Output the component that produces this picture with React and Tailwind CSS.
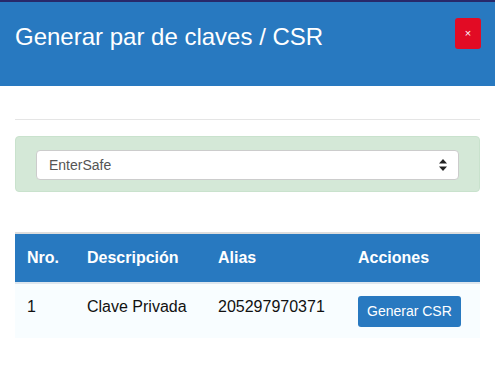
import React from 'react';

export default function App() {
    return (
        <div className="w-[495px] h-[367px] bg-white overflow-hidden" style={{ fontFamily: '"Liberation Sans", Arial, sans-serif' }}>
            <div className="h-[2px] bg-[#28296a]"></div>
            {/* modal header */}
            <div className="h-[84px] bg-[#2879c0] flex justify-between items-start pt-[16px] pl-[15px] pr-[14px]">
                <h4 className="text-white text-[24px] leading-[32px] mt-[3px]">Generar par de claves / CSR</h4>
                <button className="w-[26px] h-[31px] bg-[#e20b24] rounded-[3px] text-white text-[11px] leading-none flex items-center justify-center">
                    ×
                </button>
            </div>

            <div className="px-[15px]">
                <hr className="mt-[33px] border-0 border-t border-[#e5e5e5]" />

                <div className="mt-[16px] h-[56px] bg-[#d4e8d7] border border-[#c9e2cd] rounded-[4px] px-[20px] pt-[13px]">
                    <div className="h-[30px] bg-white border border-[#cccccc] rounded-[4px] flex items-center justify-between pl-[12px] pr-[10px]">
                        <span className="text-[14px] text-[#555555]">EnterSafe</span>
                        <svg width="8" height="12" viewBox="0 0 8 12" className="mr-[1px]">
                            <path d="M4 0 L8 4.5 L0 4.5 Z" fill="#222" />
                            <path d="M4 12 L8 7.5 L0 7.5 Z" fill="#222" />
                        </svg>
                    </div>
                </div>

                <table className="mt-[40px] w-full border-collapse border-t-2 border-[#dddddd] text-[16px]">
                    <thead>
                        <tr className="bg-[#2879c0] text-white border-b-2 border-[#dde6ee]">
                            <th className="w-[60px] text-left font-bold px-[12px] py-[12px] leading-[24px]">Nro.</th>
                            <th className="w-[131px] text-left font-bold px-[12px] py-[12px] leading-[24px]">Descripción</th>
                            <th className="w-[140px] text-left font-bold px-[12px] py-[12px] leading-[24px]">Alias</th>
                            <th className="text-left font-bold px-[12px] py-[12px] leading-[24px]">Acciones</th>
                        </tr>
                    </thead>
                    <tbody>
                        <tr className="bg-[#f8fdff] text-[#111111]">
                            <td className="align-top px-[12px] pt-[12px] pb-[11px] leading-[22px]">1</td>
                            <td className="align-top px-[12px] pt-[12px] pb-[11px] leading-[22px]">Clave Privada</td>
                            <td className="align-top px-[12px] pt-[12px] pb-[11px] leading-[22px]">205297970371</td>
                            <td className="align-top px-[12px] pt-[12px] pb-[11px]">
                                <button className="h-[31px] px-[9px] bg-[#2879c0] text-white text-[14px] rounded-[3px] block">
                                    Generar CSR
                                </button>
                            </td>
                        </tr>
                    </tbody>
                </table>
            </div>
        </div>
    );
}
